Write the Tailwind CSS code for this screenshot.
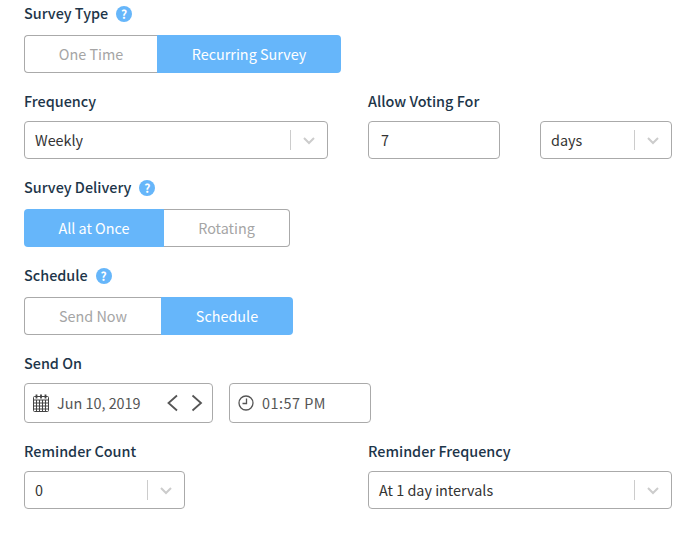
<!doctype html>
<html lang="en">
<head>
  <meta charset="utf-8" />
  <meta name="viewport" content="width=device-width,initial-scale=1" />
  <title>Survey settings</title>
  <script src="https://cdn.jsdelivr.net/npm/@tailwindcss/browser@4"></script>
</head>
<body class="bg-white font-['Noto_Sans_CJK_JP','Source_Sans_Pro',sans-serif] text-[14.4px] text-[#333] overflow-hidden">
  <form class="w-[692px] h-[540px] pl-6 pt-1">

    <!-- survey type -->
    <div class="h-5 flex items-center gap-2 font-medium text-[#1d3549]">
      <span class="pb-[2px]">Survey Type</span>
      <span class="w-4 h-4 rounded-full bg-[#66b6fa] text-white text-[12px] font-bold flex items-center justify-center">?</span>
    </div>
    <div class="mt-[11px] flex w-[317px] h-[38px]">
      <div class="w-[133px] border border-r-0 border-[#aaa] rounded-l flex items-center justify-center text-[#a5a5a5]">One Time</div>
      <div class="flex-1 bg-[#66b6fa] rounded-r flex items-center justify-center text-white">Recurring Survey</div>
    </div>

    <!-- frequency + voting -->
    <div class="mt-[19px] flex">
      <div class="w-[344px]">
        <div class="h-5 pb-[2px] flex items-center font-medium text-[#1d3549]">Frequency</div>
        <div class="mt-[9px] w-[304px] h-[38px] border border-[#aaa] rounded flex items-center pl-[10px]">
          <span class="flex-1">Weekly</span>
          <span class="w-px h-5 bg-[#ccc]"></span>
          <svg class="mx-[9px]" width="18" height="18" viewBox="0 0 18 18" fill="none" stroke="#ccc" stroke-width="2"><path d="M4 7l5 5 5-5"/></svg>
        </div>
      </div>
      <div>
        <div class="h-5 pb-[2px] flex items-center font-medium text-[#1d3549]">Allow Voting For</div>
        <div class="mt-[9px] flex gap-10">
          <div class="w-[132px] h-[38px] border border-[#aaa] rounded flex items-center pl-3">7</div>
          <div class="w-[132px] h-[38px] border border-[#aaa] rounded flex items-center pl-[10px]">
            <span class="flex-1">days</span>
            <span class="w-px h-5 bg-[#ccc]"></span>
            <svg class="mx-[9px]" width="18" height="18" viewBox="0 0 18 18" fill="none" stroke="#ccc" stroke-width="2"><path d="M4 7l5 5 5-5"/></svg>
          </div>
        </div>
      </div>
    </div>

    <!-- delivery -->
    <div class="mt-[19px] h-5 flex items-center gap-2 font-medium text-[#1d3549]">
      <span class="pb-[2px]">Survey Delivery</span>
      <span class="w-4 h-4 rounded-full bg-[#66b6fa] text-white text-[12px] font-bold flex items-center justify-center">?</span>
    </div>
    <div class="mt-[11px] flex w-[266px] h-[38px]">
      <div class="w-[140px] bg-[#66b6fa] rounded-l flex items-center justify-center text-white">All at Once</div>
      <div class="flex-1 border border-l-0 border-[#aaa] rounded-r flex items-center justify-center text-[#a5a5a5]">Rotating</div>
    </div>

    <!-- schedule -->
    <div class="mt-[19px] h-5 flex items-center gap-2 font-medium text-[#1d3549]">
      <span class="pb-[2px]">Schedule</span>
      <span class="w-4 h-4 rounded-full bg-[#66b6fa] text-white text-[12px] font-bold flex items-center justify-center">?</span>
    </div>
    <div class="mt-[11px] flex w-[269px] h-[38px]">
      <div class="w-[137px] border border-r-0 border-[#aaa] rounded-l flex items-center justify-center text-[#a5a5a5]">Send Now</div>
      <div class="flex-1 bg-[#66b6fa] rounded-r flex items-center justify-center text-white">Schedule</div>
    </div>

    <!-- send on -->
    <div class="mt-[19px] h-5 pb-[2px] flex items-center font-medium text-[#1d3549]">Send On</div>
    <div class="mt-[9px] flex gap-4 text-[#555]">
      <div class="w-[189px] h-[40px] border border-[#aaa] rounded flex items-center pl-2">
        <svg width="16" height="18" viewBox="0 0 16 18" fill="none" stroke="#444" stroke-width="1"><rect x="0.5" y="2.5" width="15" height="15" rx="1"/><path d="M0.5 6h15M0.5 9h15M0.5 12h15M0.5 15h15M3.5 6v11M6.5 6v11M9.5 6v11M12.5 6v11"/><path d="M3.5 0.5v4M8 0.5v4M12.5 0.5v4" stroke-width="1.8"/></svg>
        <span class="ml-2 w-[110px]">Jun 10, 2019</span>
        <svg width="12" height="18" viewBox="0 0 12 18" fill="none" stroke="#555" stroke-width="1.8"><path d="M10 1.5l-8.5 7.5 8.5 7.5"/></svg>
        <svg class="ml-3" width="12" height="18" viewBox="0 0 12 18" fill="none" stroke="#555" stroke-width="1.8"><path d="M1.5 1.5l8.5 7.5-8.5 7.5"/></svg>
      </div>
      <div class="w-[142px] h-[40px] border border-[#aaa] rounded flex items-center pl-2">
        <svg width="16" height="16" viewBox="0 0 16 16" fill="none" stroke="#555" stroke-width="1.3"><circle cx="8" cy="8" r="7"/><path d="M8.5 3.5v5h-4"/></svg>
        <span class="ml-2 tracking-[0.5px]">01:57 PM</span>
      </div>
    </div>

    <!-- reminders -->
    <div class="mt-[19px] flex">
      <div class="w-[344px]">
        <div class="h-5 pb-[2px] flex items-center font-medium text-[#1d3549]">Reminder Count</div>
        <div class="mt-[9px] w-[161px] h-[38px] border border-[#aaa] rounded flex items-center pl-[10px]">
          <span class="flex-1">0</span>
          <span class="w-px h-5 bg-[#ccc]"></span>
          <svg class="mx-[9px]" width="18" height="18" viewBox="0 0 18 18" fill="none" stroke="#ccc" stroke-width="2"><path d="M4 7l5 5 5-5"/></svg>
        </div>
      </div>
      <div>
        <div class="h-5 pb-[2px] flex items-center font-medium text-[#1d3549]">Reminder Frequency</div>
        <div class="mt-[9px] w-[304px] h-[38px] border border-[#aaa] rounded flex items-center pl-[10px]">
          <span class="flex-1">At 1 day intervals</span>
          <span class="w-px h-5 bg-[#ccc]"></span>
          <svg class="mx-[9px]" width="18" height="18" viewBox="0 0 18 18" fill="none" stroke="#ccc" stroke-width="2"><path d="M4 7l5 5 5-5"/></svg>
        </div>
      </div>
    </div>
  </form>
</body>
</html>
